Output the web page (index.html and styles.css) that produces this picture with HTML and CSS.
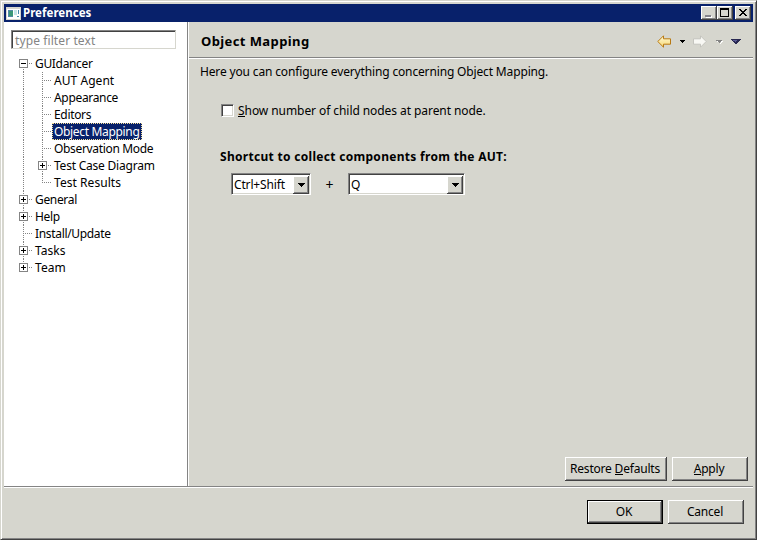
FILE: index.html
```
<!DOCTYPE html>
<html lang="en">
<head>
<meta charset="utf-8">
<title>Preferences</title>
<link rel="stylesheet" href="styles.css">
</head>
<body>
<div class="window">
  <header class="titlebar">
    <svg class="app-icon" width="15" height="13" shape-rendering="crispEdges"><path fill="#d6d6ce" d="M0 0h15v13H0z"/><path fill="#fff" d="M1 2h13v10H1z"/><path fill="#5588a8" d="M2 3h5v7H2z"/><path fill="#3a9877" d="M3 4h4v5H3z"/><path fill="#c5e5e9" d="M8 3h3v5H8z"/><path fill="#4a8bab" d="M12 3h1v4h-1zM11 9h2v1h-2z"/></svg>
    <span class="caption">Preferences</span>
    <div class="controls">
      <span class="ctl"><svg width="16" height="14" shape-rendering="crispEdges"><path fill="#fff" d="M5 10h6v2H5z"/><path fill="#84848c" d="M4 9h6v2H4z"/></svg></span>
      <span class="ctl"><svg width="16" height="14" shape-rendering="crispEdges"><path fill="#000" fill-rule="evenodd" d="M3 2h9v9H3zM4 4v6h7V4z"/></svg></span>
      <span class="ctl close"><svg width="16" height="14" shape-rendering="crispEdges"><path fill="#000" d="M4 3h2v1h1v1h2V4h1V3h2v1h-1v1h-1v1H9v1h1v1h1v1h1v1h-2V9H9V8H7v1H6v1H4V9h1V8h1V7h1V6H6V5H5V4H4z"/></svg></span>
    </div>
  </header>
  <main class="main">
    <nav class="sidebar">
      <div class="filter"><span class="t">type filter text</span></div>
      <ul class="tree">
        <li class="row first"><i class="box minus"></i><span class="label">GUIdancer</span></li>
        <li class="row sub"><span class="label wide">AUT Agent</span></li>
        <li class="row sub"><span class="label">Appearance</span></li>
        <li class="row sub"><span class="label">Editors</span></li>
        <li class="row sub"><span class="label selected">Object Mapping</span></li>
        <li class="row sub"><span class="label">Observation Mode</span></li>
        <li class="row sub"><i class="box plus"></i><span class="label mid">Test Case Diagram</span></li>
        <li class="row sub end"><span class="label wide">Test Results</span></li>
        <li class="row"><i class="box plus"></i><span class="label">General</span></li>
        <li class="row"><i class="box plus"></i><span class="label">Help</span></li>
        <li class="row"><span class="label">Install/Update</span></li>
        <li class="row"><i class="box plus"></i><span class="label wide">Tasks</span></li>
        <li class="row last"><i class="box plus"></i><span class="label wide">Team</span></li>
      </ul>
    </nav>
    <section class="page">
      <div class="page-head">
        <h1>Object Mapping</h1>
        <svg class="nav-icons" width="86" height="14"><defs><linearGradient id="gold" x2="0" y2="1"><stop offset="0" stop-color="#fffbd8"/><stop offset="1" stop-color="#f8d873"/></linearGradient></defs><path fill="url(#gold)" stroke="#b87913" d="M.8 6.5 6.5.8v3h7v5.4h-7v3z"/><path fill="#000" d="M23 5h5v1h-1v1h-1v1h-1V7h-1V6h-1z"/><path fill="#f8f8f4" stroke="#c4c4be" d="M49.2 6.5 43.5.8v3h-7v5.4h7v3z"/><path fill="#fff" d="M60 6h6v1h-1v1h-1v1h-1V8h1V7h-4z"/><path fill="#848484" d="M59 5h6v1h-1v1h-1v1h-1V7h-1V6h-2z"/><path fill="#292952" d="M74 4h10v1h-1v1h-1v1h-1v1h-1v1h-2V8h-1V7h-1V6h-1V5h-1z"/><path fill="#5a5a94" d="M76 5h4v1h-1v1h-1V6h-2z"/></svg>
      </div>
      <div class="page-body">
        <p class="intro">Here you can configure everything concerning Object Mapping.</p>
        <label class="check"><i class="tick"></i><span><u>S</u>how number of child nodes at parent node.</span></label>
        <h2>Shortcut to collect components from the AUT:</h2>
        <div class="keys">
          <div class="combo mod"><span>Ctrl+Shift</span><i class="drop"><svg width="7" height="4" shape-rendering="crispEdges"><path d="M0 0h7v1H6v1H5v1H4v1H3V3H2V2H1V1H0z"/></svg></i></div>
          <span class="and">+</span>
          <div class="combo key"><span>Q</span><i class="drop"><svg width="7" height="4" shape-rendering="crispEdges"><path d="M0 0h7v1H6v1H5v1H4v1H3V3H2V2H1V1H0z"/></svg></i></div>
        </div>
      </div>
      <div class="page-actions">
        <button class="btn restore"><span>Restore <u>D</u>efaults</span></button>
        <button class="btn"><span><u>A</u>pply</span></button>
      </div>
    </section>
  </main>
  <footer class="footer">
    <button class="btn default"><span>OK</span></button>
    <button class="btn"><span>Cancel</span></button>
  </footer>
</div>
</body>
</html>
```
FILE: styles.css
```
* { box-sizing: border-box; }
html, body { margin: 0; height: 100%; overflow: hidden; }
body { font: 12px/17px "Noto Sans", sans-serif; letter-spacing: -0.15px; color: #000; background: #d6d6ce; }
ul, p, h1, h2 { margin: 0; padding: 0; font-size: inherit; }
i { font-style: normal; }
svg { display: block; flex: none; }
u { text-decoration: none; box-shadow: inset 0 -1px #000; display: inline-block; height: 15px; line-height: 17px; vertical-align: top; }

.window { width: 757px; height: 540px; display: flex; flex-direction: column;
  border: 1px solid; border-color: #d6d6ce #424242 #424242 #d6d6ce;
  box-shadow: inset 1px 1px #fff, inset -1px -1px #848484; padding: 3px 3px 2px 3px; }
.titlebar { height: 18px; flex: none; display: flex; align-items: center; padding: 0 2px; background: #08216b; color: #fff; }
.caption { font-weight: bold; font-size: 11.5px; margin-left: 2px; letter-spacing: .03px; line-height: 18px; flex: 1; }
.controls { display: flex; }
.ctl { width: 16px; height: 14px; background: #d6d6ce; box-shadow: inset -1px -1px #424242, inset 1px 1px #fff, inset -2px -2px #848484; }
.close { margin-left: 2px; }

.main { height: 464px; flex: none; display: flex; }
.sidebar { width: 185px; flex: none; background: #fff; border-right: 1px solid #fff; box-shadow: inset -1px 0 #848484; padding: 8px 0 0 7px; }
.filter { width: 165px; height: 19px; border: 1px solid; border-color: #848484 #d6d6ce #d6d6ce #848484; box-shadow: inset 1px 1px #424242; color: #848484; padding: 1px 0 0 3px; line-height: 18px; letter-spacing: .1px; }

.tree { list-style: none; margin-top: 6px; padding-left: 8px; letter-spacing: -.33px; }
.row { height: 17px; display: grid; grid-template-columns: 15px 1fr; align-items: center;
  background: repeating-linear-gradient(90deg, #848484 0 1px, transparent 1px 2px) 4px 8px / 9px 1px no-repeat,
    repeating-linear-gradient(#848484 0 1px, transparent 1px 2px) 4px 0 / 1px 17px no-repeat; }
.row .label { grid-column: 2; justify-self: start; padding: 0 2px 0 1px; white-space: nowrap; height: 17px; }
.row .wide { letter-spacing: .05px; }
.row .mid { letter-spacing: -.22px; }
.box { grid-column: 1; grid-row: 1; width: 9px; height: 9px; border: 1px solid #848484;
  background: linear-gradient(#000, #000) 1px 3px / 5px 1px no-repeat, #fff; }
.plus { background: linear-gradient(#000, #000) 1px 3px / 5px 1px no-repeat, linear-gradient(#000, #000) 3px 1px / 1px 5px no-repeat, #fff; }
.sub { grid-template-columns: 19px 15px 1fr;
  background: repeating-linear-gradient(90deg, #848484 0 1px, transparent 1px 2px) 23px 8px / 9px 1px no-repeat,
    repeating-linear-gradient(#848484 0 1px, transparent 1px 2px) 23px 0 / 1px 17px no-repeat,
    repeating-linear-gradient(#848484 0 1px, transparent 1px 2px) 4px 0 / 1px 17px no-repeat; }
.sub .label { grid-column: 3; }
.sub .box { grid-column: 2; }
.end { background-size: 9px 1px, 1px 9px, 1px 17px; }
.last { background-size: 9px 1px, 1px 9px; }
.first { background-position: 4px 8px, 4px 8px; }
.row .selected { margin-left: -1px; padding: 0 3px 0 2px; background: #08216b; color: #fff; outline: 1px dotted #f7de94; outline-offset: -1px; }

.page { flex: 1; display: flex; flex-direction: column; }
.page-head { height: 37px; flex: none; display: flex; justify-content: space-between; align-items: center; padding: 2px 10px 0 12px; border-bottom: 1px solid #fff; box-shadow: inset 0 -1px #848484; }
.nav-icons { margin-top: 2px; }
h1 { font-size: 13px; letter-spacing: .4px; }
.page-body { flex: 1; padding: 4px 0 0 11px; }
.check { display: flex; align-items: center; gap: 4px; margin: 22px 0 0 21px; letter-spacing: -.07px; }
.tick { width: 13px; height: 13px; background: #fff; border: 1px solid; border-color: #848484 #fff #fff #848484; box-shadow: inset 1px 1px #424242, inset -1px -1px #d6d6ce; }
h2 { margin: 29px 0 0 20px; letter-spacing: .3px; }
.keys { display: flex; align-items: center; margin: 8px 0 0 31px; }
.combo { height: 22px; background: #fff; border: 1px solid; border-color: #848484 #fff #fff #848484; box-shadow: inset 1px 1px #424242, inset -1px -1px #d6d6ce; display: flex; justify-content: space-between; padding: 2px 1px 2px 2px; }
.combo span { line-height: 18px; }
.mod { width: 80px; }
.key { width: 117px; }
.and { width: 37px; text-align: center; font-size: 14px; line-height: 20px; padding-top: 2px; }
.drop { width: 16px; height: 18px; background: #d6d6ce; display: grid; place-items: center; box-shadow: inset -1px -1px #424242, inset 1px 1px #fff, inset -2px -2px #848484; }
.page-actions { display: flex; gap: 5px; justify-content: flex-end; padding: 0 5px 5px 0; }

.btn { width: 76px; height: 24px; padding: 0 2px 2px 0; border: 0; font: inherit; letter-spacing: -.2px; color: #000; background: #d6d6ce; box-shadow: inset -1px -1px #424242, inset 1px 1px #fff, inset -2px -2px #848484; }
.restore { width: 102px; }
.default { border: 1px solid #000; padding-bottom: 2px; }
.footer { flex: 1; display: flex; justify-content: flex-end; gap: 5px; padding: 13px 9px 0 0; border-top: 1px solid #848484; box-shadow: inset 0 1px #fff; }
```
